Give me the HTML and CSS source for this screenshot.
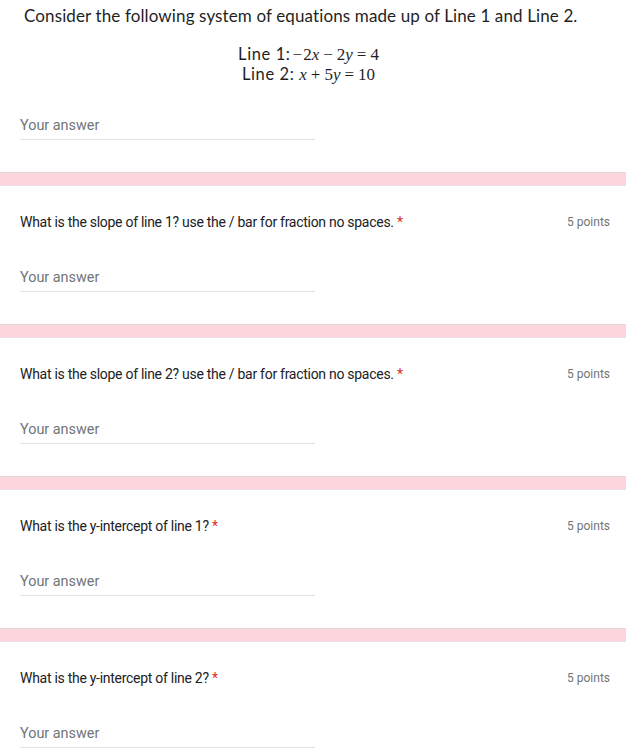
FILE: index.html
```html
<!DOCTYPE html>
<html>
<head>
<meta charset="utf-8">
<link rel="stylesheet" href="styles.css">
</head>
<body>
<div class="intro">
  <p class="lead">Consider the following system of equations made up of Line 1 and Line 2.</p>
  <div class="eqs">
    <div class="eq"><span class="lbl">Line 1:</span><span class="m"><span class="op first">−</span>2<i>x</i><span class="op">−</span>2<i>y</i><span class="op">=</span>4</span></div>
    <div class="eq"><span class="lbl">Line 2: </span><span class="m"><i>x</i><span class="op">+</span>5<i>y</i><span class="op">=</span>10</span></div>
  </div>
  <div class="field">Your answer</div>
</div>

<div class="band"></div>
<section class="q">
  <div class="qhead"><span class="qtext">What is the slope of line 1? use the / bar for fraction no spaces. <span class="req">*</span></span><span class="pts">5 points</span></div>
  <div class="field">Your answer</div>
</section>

<div class="band"></div>
<section class="q">
  <div class="qhead"><span class="qtext">What is the slope of line 2? use the / bar for fraction no spaces. <span class="req">*</span></span><span class="pts">5 points</span></div>
  <div class="field">Your answer</div>
</section>

<div class="band"></div>
<section class="q">
  <div class="qhead"><span class="qtext">What is the y-intercept of line 1? <span class="req">*</span></span><span class="pts">5 points</span></div>
  <div class="field">Your answer</div>
</section>

<div class="band"></div>
<section class="q">
  <div class="qhead"><span class="qtext">What is the y-intercept of line 2? <span class="req">*</span></span><span class="pts">5 points</span></div>
  <div class="field">Your answer</div>
</section>
</body>
</html>
```

FILE: styles.css
```css
html, body {
  margin: 0;
  padding: 0;
  background: #ffffff;
}
body {
  width: 626px;
  font-family: Roboto, "Liberation Sans", sans-serif;
  color: #202124;
}
.intro {
  padding: 6px 16px 32px 20px;
}
.lead {
  margin: 0 0 0 4px;
  font-family: Lato, "Liberation Sans", sans-serif;
  font-size: 17px;
  line-height: 20px;
  letter-spacing: 0.12px;
  color: #1f1f1f;
}
.eqs {
  margin-top: 18px;
  margin-bottom: 32px;
  text-align: center;
  padding-right: 13px;
  font-size: 16px;
  line-height: 20px;
  color: #1f1f1f;
}
.eq {
  height: 20px;
}
.lbl {
  font-family: Lato, "Liberation Sans", sans-serif;
  font-size: 16.5px;
  letter-spacing: 0.6px;
}
.m {
  font-family: "Liberation Serif", "DejaVu Serif", serif;
  font-size: 17px;
}
.m i {
  font-style: italic;
}
.op {
  margin: 0 4px;
}
.op.first {
  margin: 0 1px 0 2px;
}
.field {
  width: 295px;
  box-sizing: border-box;
  font-family: Roboto, sans-serif;
  font-size: 14.4px;
  line-height: 20px;
  padding-bottom: 3px;
  border-bottom: 1px solid #e2e2e2;
  color: #70757a;
}
.band {
  height: 12px;
  background: #fcd5dd;
  border-top: 1px solid #e3d6d9;
  border-bottom: 1px solid #ecdfe2;
}
.q {
  padding: 26px 16px 32px 20px;
}
.qhead {
  display: flex;
  justify-content: space-between;
  align-items: center;
  margin-bottom: 36px;
  height: 20px;
  line-height: 20px;
}
.qtext {
  font-family: Roboto, sans-serif;
  font-size: 14px;
  letter-spacing: -0.28px;
  color: #202124;
}
.req {
  color: #d93025;
  letter-spacing: 0;
}
.pts {
  font-family: Roboto, sans-serif;
  font-size: 12px;
  color: #70757a;
}
```
